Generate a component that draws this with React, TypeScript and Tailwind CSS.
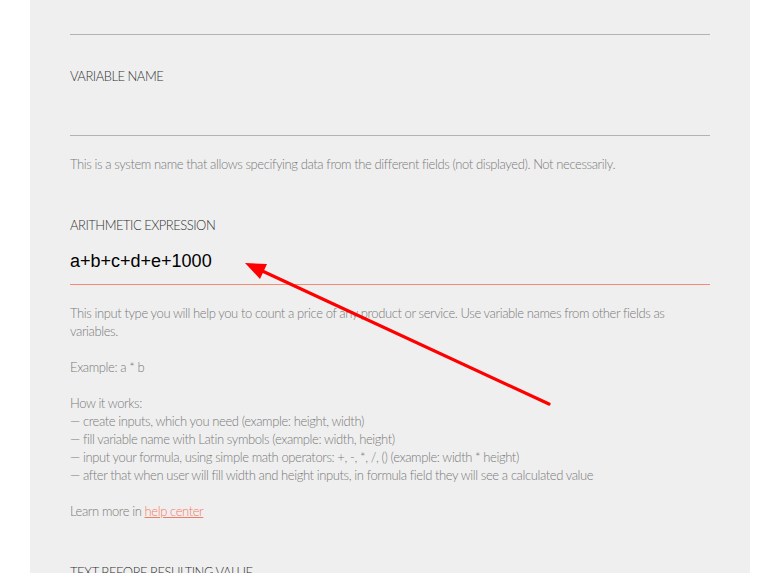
const HOW_IT_WORKS = [
  "— create inputs, which you need (example: height, width)",
  "— fill variable name with Latin symbols (example: width, height)",
  "— input your formula, using simple math operators: +, -, *, /, () (example: width * height)",
  "— after that when user will fill width and height inputs, in formula field they will see a calculated value",
];

const font = { fontFamily: "Lato, 'Open Sans', sans-serif" };

function Label({ children, className = "" }: { children: React.ReactNode; className?: string }) {
  return (
    <div className={`text-[13px] leading-[18px] uppercase tracking-[-0.5px] text-[#333] font-light ${className}`}>
      {children}
    </div>
  );
}

export default function App() {
  return (
    <div className="relative h-[573px] w-[768px] overflow-hidden bg-white" style={font}>
      <div className="ml-[30px] h-full w-[720px] bg-[#efefef] px-10">
        {/* ── previous field ──────────────────────────────────── */}
        <div className="h-[35px] border-b border-[#b3b3b3]" />

        {/* ── variable name ───────────────────────────────────── */}
        <Label className="mt-[32px]">Variable name</Label>
        <div className="h-[51px] border-b border-[#b3b3b3]" />
        <p className="mt-[19px] text-[13px] leading-[18px] font-light tracking-[-0.4px] text-[#7a7a7a]">
          This is a system name that allows specifying data from the different fields (not displayed). Not necessarily.
        </p>

        {/* ── arithmetic expression ───────────────────────────── */}
        <Label className="mt-[43px]">Arithmetic expression</Label>
        <div
          className="flex h-[51px] items-center border-b border-[#f58a77] pt-[4px] text-[18px] text-black"
          style={{ fontFamily: "'Liberation Sans', Arial, sans-serif" }}
        >
          a+b+c+d+e+1000
        </div>

        <div className="mt-[19px] text-[13px] leading-[18px] font-light tracking-[-0.4px] text-[#7a7a7a]">
          <p>
            This input type you will help you to count a price of any product or service. Use variable names from other fields as variables.
          </p>
          <p className="mt-[18px]">Example: a * b</p>
          <p className="mt-[18px]">How it works:</p>
          {HOW_IT_WORKS.map((line) => (
            <p key={line}>{line}</p>
          ))}
          <p className="mt-[18px]">
            Learn more in{" "}
            <a href="#" className="text-[#f47a64] underline">
              help center
            </a>
          </p>
        </div>

        <Label className="mt-[43px]">Text before resulting value</Label>
      </div>

      {/* ── annotation arrow ──────────────────────────────────── */}
      <svg className="pointer-events-none absolute left-0 top-0" width="768" height="573">
        <line x1="549" y1="404" x2="258" y2="269" stroke="#ff0000" strokeWidth="3.2" strokeLinecap="round" />
        <polygon points="245,263 267,264 260,279" fill="#ff0000" />
      </svg>
    </div>
  );
}
